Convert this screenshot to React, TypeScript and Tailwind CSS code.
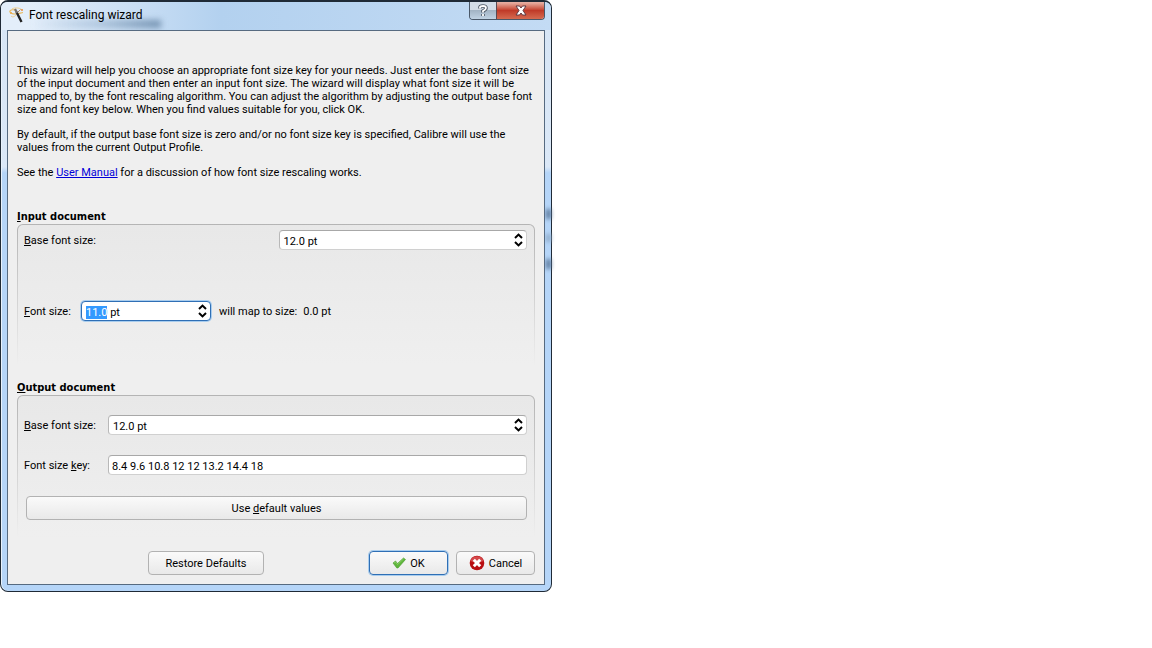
import { useEffect, useRef, useState } from 'react';
import type { ReactNode } from 'react';

function GroupBox({ title, children }: { title: ReactNode; children: ReactNode }) {
  return (
    <section>
      <h2 className="font-['DejaVu_Sans_Condensed','DejaVu_Sans',sans-serif] font-bold mb-px">{title}</h2>
      <div className="rounded-t-md bg-linear-to-b from-[#b4b4b4] to-[#efefef] p-px">
        <div className="h-[140px] rounded-t-[5px] bg-linear-to-b from-[#e8e8e8] to-[#efefef] pl-1.5 pr-[7px]">
          {children}
        </div>
      </div>
    </section>
  );
}

function SpinArrows() {
  return (
    <span className="flex flex-col justify-center pr-[3px]">
      <button type="button" aria-label="Increase" className="flex h-2 items-center">
        <svg width="9" height="6" viewBox="0 0 9 6" fill="none" stroke="#000" strokeWidth="2">
          <path d="M1 5 L4.5 1.6 L8 5" />
        </svg>
      </button>
      <button type="button" aria-label="Decrease" className="flex h-2 items-center">
        <svg width="9" height="6" viewBox="0 0 9 6" fill="none" stroke="#000" strokeWidth="2">
          <path d="M1 1 L4.5 4.4 L8 1" />
        </svg>
      </button>
    </span>
  );
}

function SpinBox({ id, initial, selected = false }: { id: string; initial: string; selected?: boolean }) {
  const [value, setValue] = useState(initial);
  const ref = useRef<HTMLInputElement>(null);

  // only the number is selected, not the unit
  useEffect(() => {
    if (selected && ref.current) {
      ref.current.focus();
      ref.current.setSelectionRange(0, initial.indexOf(' '));
    }
  }, [selected, initial]);

  return (
    <div
      className={
        selected
          ? 'flex h-5 rounded border border-[#2f6fb5] bg-white ring-1 ring-[#a9cdee]'
          : 'flex h-5 rounded border border-[#d0d0d0] border-t-[#a8a8a8] border-l-[#b8b8b8] bg-white'
      }
    >
      <input
        id={id}
        ref={ref}
        value={value}
        onChange={(e) => setValue(e.target.value)}
        className="min-w-0 flex-1 bg-transparent pl-1 pt-0.5 outline-none selection:bg-[#3399ff] selection:text-white"
      />
      <SpinArrows />
    </div>
  );
}

function WandIcon() {
  return (
    <svg width="16" height="16" viewBox="0 0 16 16" fill="none">
      <path d="M6 3 C1 2 -1 5 3 6.500 C6 8 11 6 14 5.500" stroke="#e9b95c" strokeWidth="1.200" />
      <path d="M3 2 C6 0 12 1 13 3 M2 9 C4 11 6 9 7 8" stroke="#f0ce8c" strokeWidth="1" />
      <path d="M7.500 5 L12.500 15" stroke="#222" strokeWidth="2.400" />
      <path d="M6 2 L8 6" stroke="#77706a" strokeWidth="2.200" />
      <path d="M9 5 L11.500 2.500" stroke="#a98667" strokeWidth="1" />
      <circle cx="13" cy="3" r="1" fill="#e88a3a" />
      <circle cx="2" cy="6" r="1" fill="#eaa94e" />
    </svg>
  );
}

function CheckIcon() {
  return (
    <svg width="14" height="12" viewBox="0 0 14 12">
      <path d="M1 6 L3.500 4 L5.500 6.500 L11.500 1 L13.500 2.500 L6 11 L4.800 11 Z" fill="#5fb53c" stroke="#459a2c" strokeWidth="0.600" />
      <path d="M2 6 L3.500 5 L5.500 7.500 L11.500 2" fill="none" stroke="#8ed36c" strokeWidth="0.800" />
    </svg>
  );
}

function CancelIcon() {
  return (
    <svg width="16" height="16" viewBox="0 0 16 16">
      <circle cx="8" cy="8" r="7.300" fill="#b80d10" />
      <path d="M1.500 6 A6.800 6.800 0 0 1 14.500 6 Q8 9 1.500 6" fill="#d4484a" />
      <path d="M4.800 4.800 L11.200 11.200 M11.200 4.800 L4.800 11.200" stroke="#fff" strokeWidth="3" />
    </svg>
  );
}

function TitleBar() {
  return (
    <header className="relative flex h-7 items-start pl-2 pr-1.5">
      <span className="absolute left-8 top-[18px] h-2 w-32 bg-linear-to-r from-transparent via-[#7f9dbc]/40 to-[#5f7f9f]/80 blur-[3px]" />
      <div className="relative flex flex-1 items-center gap-1 pt-[5px]">
        <WandIcon />
        <h1 className="text-[12px] leading-4">Font rescaling wizard</h1>
      </div>
      <div className="flex h-[18px] overflow-hidden rounded-b border border-t-0 border-[#4a5868]">
        <button type="button" aria-label="Help" className="flex w-[27px] items-center justify-center border-r border-[#5a4a52] bg-linear-to-b from-[#d3dde7] from-45% via-[#a3b4c4] via-50% to-[#c0d2e3]">
          <svg width="10" height="13" viewBox="0 0 10 13" fill="none">
            <path d="M2 4.500 V3.500 Q2 2 5 2 T8 4 Q8 5.500 5 7 V8.500 M5 10 V12" stroke="#4c5663" strokeWidth="3.600" />
            <path d="M2 4.500 V3.500 Q2 2 5 2 T8 4 Q8 5.500 5 7 V8.500 M5 10 V12" stroke="#fff" strokeWidth="1.800" />
          </svg>
        </button>
        <button type="button" aria-label="Close" className="flex w-[47px] items-center justify-center bg-linear-to-b from-[#e5ac9f] from-5% via-[#c03a28] via-50% to-[#d56a50]">
          <svg width="12" height="11" viewBox="0 0 12 11">
            <path d="M1 1 H4.500 L6 3 L7.500 1 H11 L8 5.500 L11 10 H7.500 L6 8 L4.500 10 H1 L4 5.500 Z" fill="#fff" stroke="#5e3a42" strokeWidth="1" />
          </svg>
        </button>
      </div>
    </header>
  );
}

const buttonStyle =
  'flex h-6 items-center justify-center rounded border border-[#b2b2b2] bg-linear-to-b from-[#fafafa] to-[#e9e9e9]';

export default function App() {
  const [sizeKey, setSizeKey] = useState('8.4 9.6 10.8 12 12 13.2 14.4 18');

  return (
    <main className="min-h-screen bg-white font-['Roboto',sans-serif] text-[11px] leading-[13px] text-black">
      <div className="relative w-full max-w-[552px] rounded-lg border border-t-2 border-[#1f2a36] bg-linear-to-b from-[#d6e5f5] from-0% via-[#dbe8f7] via-28% to-[#b5d5f8] to-29% px-1.5 pb-1.5 shadow-[inset_1px_0_0_#e8f2fc]">
        {/* blurred shapes behind the glass frame */}
        <span className="absolute right-0 top-[207px] h-2.5 w-[5px] bg-[#5c7a9c] blur-[2px]" />
        <span className="absolute right-0 top-[232px] h-2 w-[5px] bg-[#8fabca] blur-[2px]" />
        <span className="absolute right-0 top-[257px] h-2.5 w-[5px] bg-[#5c7a9c] blur-[2px]" />
        <div className="-mx-1.5 rounded-t-md bg-linear-to-r from-[#e3eefa] from-5% via-[#b3d1ef] via-40% to-[#c3dbf4]">
          <TitleBar />
        </div>
        <form className="relative border border-[#566a80] bg-[#efefef] px-[9px] pb-[9px] pt-[33px]" onSubmit={(e) => e.preventDefault()}>
          <div className="mb-[31px] flex flex-col gap-3">
            <p>
              This wizard will help you choose an appropriate font size key for your needs. Just enter the base font size
              of the input document and then enter an input font size. The wizard will display what font size it will be
              mapped to, by the font rescaling algorithm. You can adjust the algorithm by adjusting the output base font
              size and font key below. When you find values suitable for you, click OK.
            </p>
            <p>
              By default, if the output base font size is zero and/or no font size key is specified, Calibre will use the
              values from the current Output Profile.
            </p>
            <p>
              See the <a href="#manual" className="text-[#0000d8] underline">User Manual</a> for a discussion of how font
              size rescaling works.
            </p>
          </div>

          <div className="flex flex-col gap-[15px]">
            <GroupBox title={<><u>I</u>nput document</>}>
              <div className="grid grid-cols-2 items-center gap-1.5 pt-[5px]">
                <label htmlFor="input-base"><u>B</u>ase font size:</label>
                <SpinBox id="input-base" initial="12.0 pt" />
              </div>
              <div className="flex items-center pt-[51px]">
                <label htmlFor="font-size" className="w-[57px]"><u>F</u>ont size:</label>
                <div className="w-[130px]">
                  <SpinBox id="font-size" initial="11.0 pt" selected />
                </div>
                <span className="ml-2">will map to size:</span>
                <output htmlFor="font-size" className="ml-1.5">0.0 pt</output>
              </div>
            </GroupBox>

            <GroupBox title={<><u>O</u>utput document</>}>
              <div className="grid grid-cols-[84px_1fr] items-center gap-y-5 pt-[19px]">
                <label htmlFor="output-base"><u>B</u>ase font size:</label>
                <SpinBox id="output-base" initial="12.0 pt" />
                <label htmlFor="size-key">Font size <u>k</u>ey:</label>
                <input
                  id="size-key"
                  value={sizeKey}
                  onChange={(e) => setSizeKey(e.target.value)}
                  className="h-5 w-full min-w-0 rounded border border-[#d0d0d0] border-t-[#a8a8a8] border-l-[#b8b8b8] bg-white pl-[3px] pt-0.5 outline-none"
                />
              </div>
              <div className="pl-0.5 pt-[21px]">
                <button type="button" className={`${buttonStyle} w-full`}>
                  <span>Use <u>d</u>efault values</span>
                </button>
              </div>
            </GroupBox>
          </div>

          <div className="mt-3.5 flex">
            <div className="flex flex-1 justify-end">
              <button type="button" className={`${buttonStyle} w-[116px]`}>Restore Defaults</button>
            </div>
            <div className="ml-[105px] flex gap-2">
              <button type="submit" className="flex h-6 w-[79px] items-center justify-center gap-1 rounded border border-[#2f6fb5] bg-linear-to-b from-[#fafafa] to-[#e9e9e9] ring-1 ring-[#a9cdee]">
                <CheckIcon />
                OK
              </button>
              <button type="button" className={`${buttonStyle} w-[79px] gap-1`}>
                <CancelIcon />
                Cancel
              </button>
            </div>
          </div>
        </form>
      </div>
    </main>
  );
}
